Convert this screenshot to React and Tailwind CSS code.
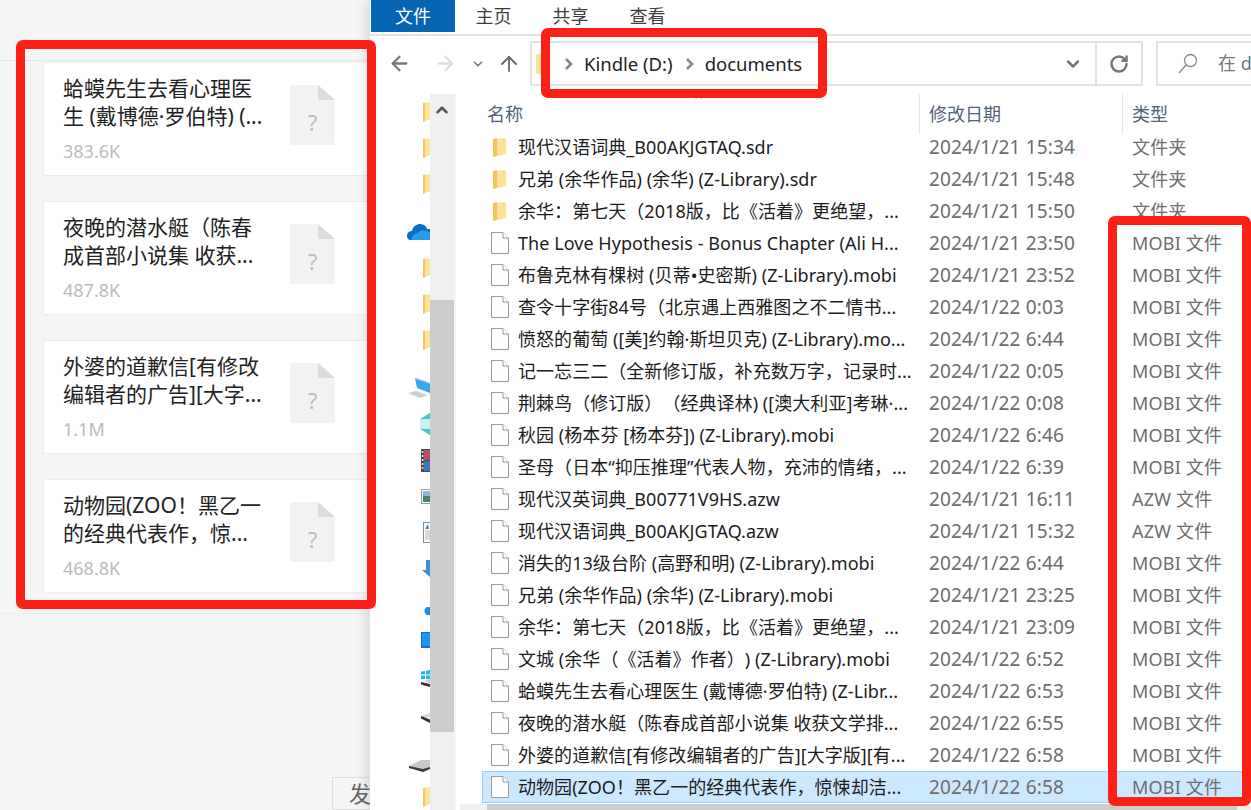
import { ArrowLeft, ArrowRight, ArrowUp, ChevronDown, ChevronUp, RotateCw } from "lucide-react";

const cards = [
  { title: "蛤蟆先生去看心理医\n生 (戴博德·罗伯特) (...", size: "383.6K" },
  { title: "夜晚的潜水艇（陈春\n成首部小说集 收获...", size: "487.8K" },
  { title: "外婆的道歉信[有修改\n编辑者的广告][大字...", size: "1.1M" },
  { title: "动物园(ZOO！黑乙一\n的经典代表作，惊...", size: "468.8K" },
];

const files = [
  ["现代汉语词典_B00AKJGTAQ.sdr", "2024/1/21 15:34", "文件夹", true],
  ["兄弟 (余华作品) (余华) (Z-Library).sdr", "2024/1/21 15:48", "文件夹", true],
  ["余华：第七天（2018版，比《活着》更绝望，...", "2024/1/21 15:50", "文件夹", true],
  ["The Love Hypothesis - Bonus Chapter (Ali H...", "2024/1/21 23:50", "MOBI 文件"],
  ["布鲁克林有棵树 (贝蒂•史密斯) (Z-Library).mobi", "2024/1/21 23:52", "MOBI 文件"],
  ["查令十字街84号（北京遇上西雅图之不二情书...", "2024/1/22 0:03", "MOBI 文件"],
  ["愤怒的葡萄 ([美]约翰·斯坦贝克) (Z-Library).mo...", "2024/1/22 6:44", "MOBI 文件"],
  ["记一忘三二（全新修订版，补充数万字，记录时...", "2024/1/22 0:05", "MOBI 文件"],
  ["荆棘鸟（修订版）（经典译林) ([澳大利亚]考琳·...", "2024/1/22 0:08", "MOBI 文件"],
  ["秋园 (杨本芬 [杨本芬]) (Z-Library).mobi", "2024/1/22 6:46", "MOBI 文件"],
  ["圣母（日本“抑压推理”代表人物，充沛的情绪，...", "2024/1/22 6:39", "MOBI 文件"],
  ["现代汉英词典_B00771V9HS.azw", "2024/1/21 16:11", "AZW 文件"],
  ["现代汉语词典_B00AKJGTAQ.azw", "2024/1/21 15:32", "AZW 文件"],
  ["消失的13级台阶 (高野和明) (Z-Library).mobi", "2024/1/22 6:44", "MOBI 文件"],
  ["兄弟 (余华作品) (余华) (Z-Library).mobi", "2024/1/21 23:25", "MOBI 文件"],
  ["余华：第七天（2018版，比《活着》更绝望，...", "2024/1/21 23:09", "MOBI 文件"],
  ["文城 (余华（《活着》作者）) (Z-Library).mobi", "2024/1/22 6:52", "MOBI 文件"],
  ["蛤蟆先生去看心理医生 (戴博德·罗伯特) (Z-Libr...", "2024/1/22 6:53", "MOBI 文件"],
  ["夜晚的潜水艇（陈春成首部小说集 收获文学排...", "2024/1/22 6:55", "MOBI 文件"],
  ["外婆的道歉信[有修改编辑者的广告][大字版][有...", "2024/1/22 6:58", "MOBI 文件"],
  ["动物园(ZOO！黑乙一的经典代表作，惊悚却洁...", "2024/1/22 6:58", "MOBI 文件"],
];

// nav pane icons, all cut off by the scrollbar on their right side
const NavFolder = () => (
  <svg width="7" height="20" viewBox="0 0 7 20">
    <path d="M0 1 L7 0 V17 L0 20 Z" fill="#fbe39a" />
    <path d="M0 1 L2 .7 V19 L0 20 Z" fill="#f2c861" />
  </svg>
);
const NavCloud = () => (
  <svg width="23" height="16" viewBox="0 0 23 16">
    <path d="M0 12 C0 8 3 7 5 7 C6 2 10 0 13 0 C17 0 20 3 20 5 L23 5 V16 H4 C1 16 0 14 0 12 Z" fill="#0a6fc4" />
    <path d="M5 16 C4 12 8 9 11 9 C13 6 19 5 23 9 V16 Z" fill="#2a9be8" />
  </svg>
);
const NavComputer = () => (
  <svg width="22" height="20" viewBox="0 0 22 20">
    <path d="M7 0 L22 5 V15 L9 10 Z" fill="#3aa6ea" />
    <path d="M7 0 L22 5 V6 L7 1 Z" fill="#7fcaf5" />
    <path d="M0 15 L8 13 L19 17 L12 20 Z" fill="#cfcfcf" />
  </svg>
);
const Nav3D = () => (
  <svg width="10" height="22" viewBox="0 0 10 22">
    <path d="M0 6 L10 6 V16 L0 16 Z" fill="#c6f0f0" />
    <path d="M0 6 L10 0 V6 Z M0 16 L10 16 V22 Z" fill="#4cc4cc" />
  </svg>
);
const NavVideo = () => (
  <svg width="9" height="23" viewBox="0 0 9 23">
    <rect width="9" height="23" fill="#4a4a4a" />
    <rect x="0.8" y="2" width="1.6" height="2" fill="#ddd" />
    <rect x="0.8" y="6" width="1.6" height="2" fill="#ddd" />
    <rect x="0.8" y="10" width="1.6" height="2" fill="#ddd" />
    <rect x="0.8" y="14" width="1.6" height="2" fill="#ddd" />
    <rect x="0.8" y="18" width="1.6" height="2" fill="#ddd" />
    <rect x="3" y="1" width="6" height="10" fill="#b4506c" />
    <rect x="3" y="12" width="6" height="10" fill="#3a78b8" />
  </svg>
);
const NavPicture = () => (
  <svg width="9" height="15" viewBox="0 0 9 15">
    <rect x=".5" y=".5" width="9" height="14" fill="#fff" stroke="#9a9a9a" />
    <rect x="2" y="2" width="7" height="5" fill="#8fb8d8" />
    <rect x="2" y="7" width="7" height="6" fill="#4f7f70" />
  </svg>
);
const NavDoc = () => (
  <svg width="7" height="21" viewBox="0 0 7 21">
    <rect x=".5" y=".5" width="8" height="20" fill="#fff" stroke="#8a8a8a" />
    <path d="M2 7 L5 2 L6 7 Z" fill="#3a8ed0" />
    <path d="M2 9H7M2 11H7M2 13H7M2 15H7M2 17H7" stroke="#b5b5b5" />
  </svg>
);
const NavDownload = () => (
  <svg width="8" height="17" viewBox="0 0 8 17">
    <path d="M4 0 H8 V17 L0 10 H4 Z" fill="#3b8fd4" />
  </svg>
);
const NavMusic = () => (
  <svg width="6" height="8" viewBox="0 0 6 8">
    <circle cx="5" cy="4" r="4.5" fill="#1e8fe0" />
  </svg>
);
const NavDesktop = () => (
  <svg width="9" height="16" viewBox="0 0 9 16">
    <rect width="9" height="16" fill="#1e6fb8" />
    <rect x="1" y="1" width="8" height="13" fill="#1e96f5" />
  </svg>
);
const NavWinDrive = () => (
  <svg width="9" height="17" viewBox="0 0 9 17">
    <path d="M0 1.5 L4 1 V4.5 H0 Z M5 .8 L9 0 V4.5 H5 Z M0 5.5 H4 V9 H0 Z M5 5.5 H9 V9.5 L5 9 Z" fill="#22b5e8" />
    <path d="M0 12 L9 14 V17 L0 14.5 Z" fill="#333" />
    <path d="M2 11 L9 9.5 V13.5 Z" fill="#d0d0d0" />
  </svg>
);
const NavDrive = () => (
  <svg width="9" height="10" viewBox="0 0 9 10">
    <path d="M0 3 L9 0 V4 L3 5 Z" fill="#d5d5d5" />
    <path d="M0 3 L9 6.5 V10 L0 5.5 Z" fill="#333" />
  </svg>
);
const NavUsb = () => (
  <svg width="21" height="12" viewBox="0 0 21 12">
    <path d="M0 6 L12 0 H21 V9 L14 12 Z" fill="#c9c9c9" />
    <path d="M0 6 L14 9 L21 7 V9 L14 12 L0 8 Z" fill="#3a3a3a" />
  </svg>
);

const navItems = [
  { Icon: NavFolder },
  { Icon: NavFolder },
  { Icon: NavFolder },
  { Icon: NavCloud, gap: "mt-[12px]" },
  { Icon: NavFolder },
  { Icon: NavFolder },
  { Icon: NavFolder },
  { Icon: NavComputer, gap: "mt-[12px]" },
  { Icon: Nav3D },
  { Icon: NavVideo },
  { Icon: NavPicture },
  { Icon: NavDoc },
  { Icon: NavDownload },
  { Icon: NavMusic, gap: "mt-[7px]" },
  { Icon: NavDesktop, gap: "-mt-[7px]" },
  { Icon: NavWinDrive, gap: "mt-[2px]" },
  { Icon: NavDrive, gap: "mt-[4px]" },
  { Icon: NavUsb, gap: "mt-[12px]" },
  { Icon: NavFolder, gap: "-mt-[5px]" },
];

const FileIcon = () => (
  <svg width="18" height="22" viewBox="0 0 18 22" className="shrink-0">
    <path d="M.5 .5 H12 L17.5 6 V21.5 H.5 Z" fill="#fdfdfd" stroke="#9b9b9b" />
    <path d="M12 .5 V6 H17.5" fill="#fff" stroke="#9b9b9b" />
  </svg>
);

const FolderIcon = () => (
  <svg width="18" height="22" viewBox="0 0 18 22" className="shrink-0">
    <path d="M2 3 L15 2 V18 L2 21 Z" fill="#fbe39a" />
    <path d="M2 3 L6 2 V19.5 L2 21 Z" fill="#f2c560" />
  </svg>
);

const UnknownDoc = () => (
  <div className="relative mb-[8px] flex h-[60px] w-[45px] shrink-0 items-center justify-center">
    <svg width="45" height="60" viewBox="0 0 45 60" className="absolute inset-0">
      <path d="M2 0 H28 L45 15 V58 a2 2 0 0 1 -2 2 H2 a2 2 0 0 1 -2 -2 V2 a2 2 0 0 1 2 -2 Z" fill="#f2f2f2" />
      <path d="M28 0 L45 15 H28 Z" fill="#dcdcdc" />
    </svg>
    <span className="relative mt-[14px] text-[22px] text-[#bdbdbd]">?</span>
  </div>
);

const SearchGlass = () => (
  <svg width="20" height="22" viewBox="0 0 20 22" fill="none" stroke="#8a8a8a" strokeWidth="1.3">
    <circle cx="12.5" cy="7.5" r="6" />
    <path d="M8 12 L1 20" />
  </svg>
);

export default function App() {
  return (
    <div className="relative flex h-[810px] w-[1251px] overflow-hidden bg-white [font-family:'Noto_Sans','Noto_Sans_CJK_SC',sans-serif] [text-spacing-trim:space-all]">
      {/* chat panel on the left */}
      <aside className="flex w-[370px] shrink-0 flex-col overflow-hidden bg-[#f5f5f5]">
        <div className="h-[61px] shrink-0 border-b border-[#e4e4e4]" />
        <div className="flex flex-col gap-[25px] pt-px pl-[43px]">
          {cards.map((card) => (
            <div
              key={card.size}
              className="flex h-[114px] w-[340px] items-center rounded-[2px] border border-[#ececec] bg-white pl-[19px]"
            >
              <div className="mb-[2px] w-[227px]">
                <p className="whitespace-pre text-[21px] leading-[28px] text-[#222]">{card.title}</p>
                <p className="mt-[9px] text-[18px] leading-[24px] text-[#bbbbbb]">{card.size}</p>
              </div>
              <UnknownDoc />
            </div>
          ))}
        </div>
        <div className="mt-[20px] flex grow flex-col justify-end border-t border-[#ececec]">
          <button className="-mr-[40px] ml-auto flex h-[33px] w-[78px] items-center border border-[#dedede] pl-[16px] text-[22px] text-[#666]">
            发
          </button>
        </div>
      </aside>

      {/* explorer window */}
      <main className="flex min-w-0 grow flex-col bg-white shadow-[-5px_0_10px_rgba(0,0,0,0.1)]">
        <div className="flex h-[36px] shrink-0 border-b-2 border-[#e3e3e3] pb-[2px] pl-px text-[18px]">
          <div className="flex w-[84px] items-center justify-center bg-[#0565b2] text-white">文件</div>
          <div className="flex w-[77px] items-center justify-center text-[#3d3d3d]">主页</div>
          <div className="flex w-[77px] items-center justify-center text-[#3d3d3d]">共享</div>
          <div className="flex w-[77px] items-center justify-center text-[#3d3d3d]">查看</div>
        </div>

        <div className="flex h-[58px] shrink-0 items-start pt-[5px]">
          <div className="flex h-[45px] w-[160px] shrink-0 items-center pl-[18px]">
            <ArrowLeft size={23} strokeWidth={2.4} className="text-[#777]" />
            <ArrowRight size={23} strokeWidth={2.4} className="ml-[23px] text-[#dedede]" />
            <ChevronDown size={14} strokeWidth={3} className="ml-[14px] text-[#777]" />
            <ArrowUp size={24} strokeWidth={1.8} className="ml-[12px] text-[#666]" />
          </div>
          <div className="flex h-[45px] w-[613px] shrink-0 items-center border-2 border-[#e3e3e3] text-[18.5px] text-[#222]">
            <div className="ml-[4px] h-[20px] w-[6px] bg-[#fbe39a]" />
            <svg width="10" height="14" viewBox="0 0 10 14" className="ml-[22px]">
              <path d="M2 2 L7 7 L2 12" fill="none" stroke="#888" strokeWidth="2.6" />
            </svg>
            <span className="ml-[10px]">Kindle (D:)</span>
            <svg width="10" height="14" viewBox="0 0 10 14" className="ml-[12px]">
              <path d="M2 2 L7 7 L2 12" fill="none" stroke="#888" strokeWidth="2.6" />
            </svg>
            <span className="ml-[10px]">documents</span>
            <ChevronDown size={20} strokeWidth={3} className="ml-auto mr-[12px] text-[#777]" />
            <div className="flex h-full w-[46px] items-center justify-center border-l-2 border-[#e3e3e3]">
              <RotateCw size={20} strokeWidth={3} className="text-[#777]" />
            </div>
          </div>
          <div className="ml-[13px] flex h-[45px] grow items-center border-2 border-[#e3e3e3] bg-white pl-[20px] text-[18px] text-[#777]">
            <SearchGlass />
            <span className="ml-[20px] whitespace-nowrap">在 d</span>
          </div>
        </div>

        <div className="flex min-h-0 grow">
          {/* navigation pane */}
          <div className="flex w-[60px] shrink-0 flex-col items-end overflow-hidden">
            {navItems.map(({ Icon, gap }, i) => (
              <div key={i} className={`flex h-[36px] shrink-0 items-center ${gap || ""}`}>
                <Icon />
              </div>
            ))}
          </div>
          <div className="flex w-[24px] shrink-0 flex-col bg-[#f0f0f0]">
            <div className="flex h-[206px] shrink-0 justify-center pt-[7px]">
              <ChevronUp size={18} strokeWidth={3.4} className="text-[#555]" />
            </div>
            <div className="h-[432px] shrink-0 bg-[#cdcdcd]" />
          </div>
          <div className="w-[6px] shrink-0 border-l-2 border-[#f4f4f4]" />

          {/* file list */}
          <div className="flex min-w-0 grow flex-col">
            <div className="relative ml-[22px] grid h-[37px] shrink-0 grid-cols-[437px_203px_1fr] text-[18px] text-[#4f6278]">
              <div className="pl-[5px] pt-[7px]">名称</div>
              <div className="h-[40px] border-l border-[#e5e5e5] pl-[9px] pt-[7px]">修改日期</div>
              <div className="h-[40px] border-l border-[#e5e5e5] pl-[9px] pt-[7px]">类型</div>
              <ChevronUp size={11} strokeWidth={1.5} className="absolute left-[211px] -top-[2px] text-[#999]" />
            </div>
            <div className="ml-[22px] flex flex-col">
              {files.map(([name, date, type, isFolder], i) => (
                <div
                  key={i}
                  className={`grid h-[32px] shrink-0 grid-cols-[436px_203px_1fr] items-center border ${
                    i === files.length - 1 ? "border-[#99d1ff] bg-[#cce8ff]" : "border-transparent"
                  }`}
                >
                  <div className="flex items-center gap-[9px] whitespace-nowrap pl-[8px] text-[18px] tracking-[0.05px] text-[#1c1c1c]">
                    {isFolder ? <FolderIcon /> : <FileIcon />}
                    <span>{name}</span>
                  </div>
                  <div className="pl-[10px] text-[19px] tracking-[0.15px] text-[#6d6d6d]">{date}</div>
                  <div className="whitespace-nowrap pl-[10px] text-[18px] tracking-[0.2px] text-[#6d6d6d]">{type}</div>
                </div>
              ))}
            </div>
            <div className="mt-px flex h-[6px] shrink-0 bg-[#f0f0f0]">
              <div className="ml-[27px] w-[750px] bg-[#cdcdcd]" />
            </div>
          </div>
        </div>
      </main>

      {/* red highlight frames drawn on top of the screenshot */}
      <div className="absolute left-[16px] top-[40px] h-[569px] w-[360px] rounded-[7px] border-[9px] border-[#fb2116]" />
      <div className="absolute left-[541px] top-[28px] h-[70px] w-[286px] rounded-[7px] border-[9px] border-[#fb2116]" />
      <div className="absolute left-[1108px] top-[216px] h-[590px] w-[143px] rounded-[7px] border-[9px] border-[#fb2116]" />
    </div>
  );
}
